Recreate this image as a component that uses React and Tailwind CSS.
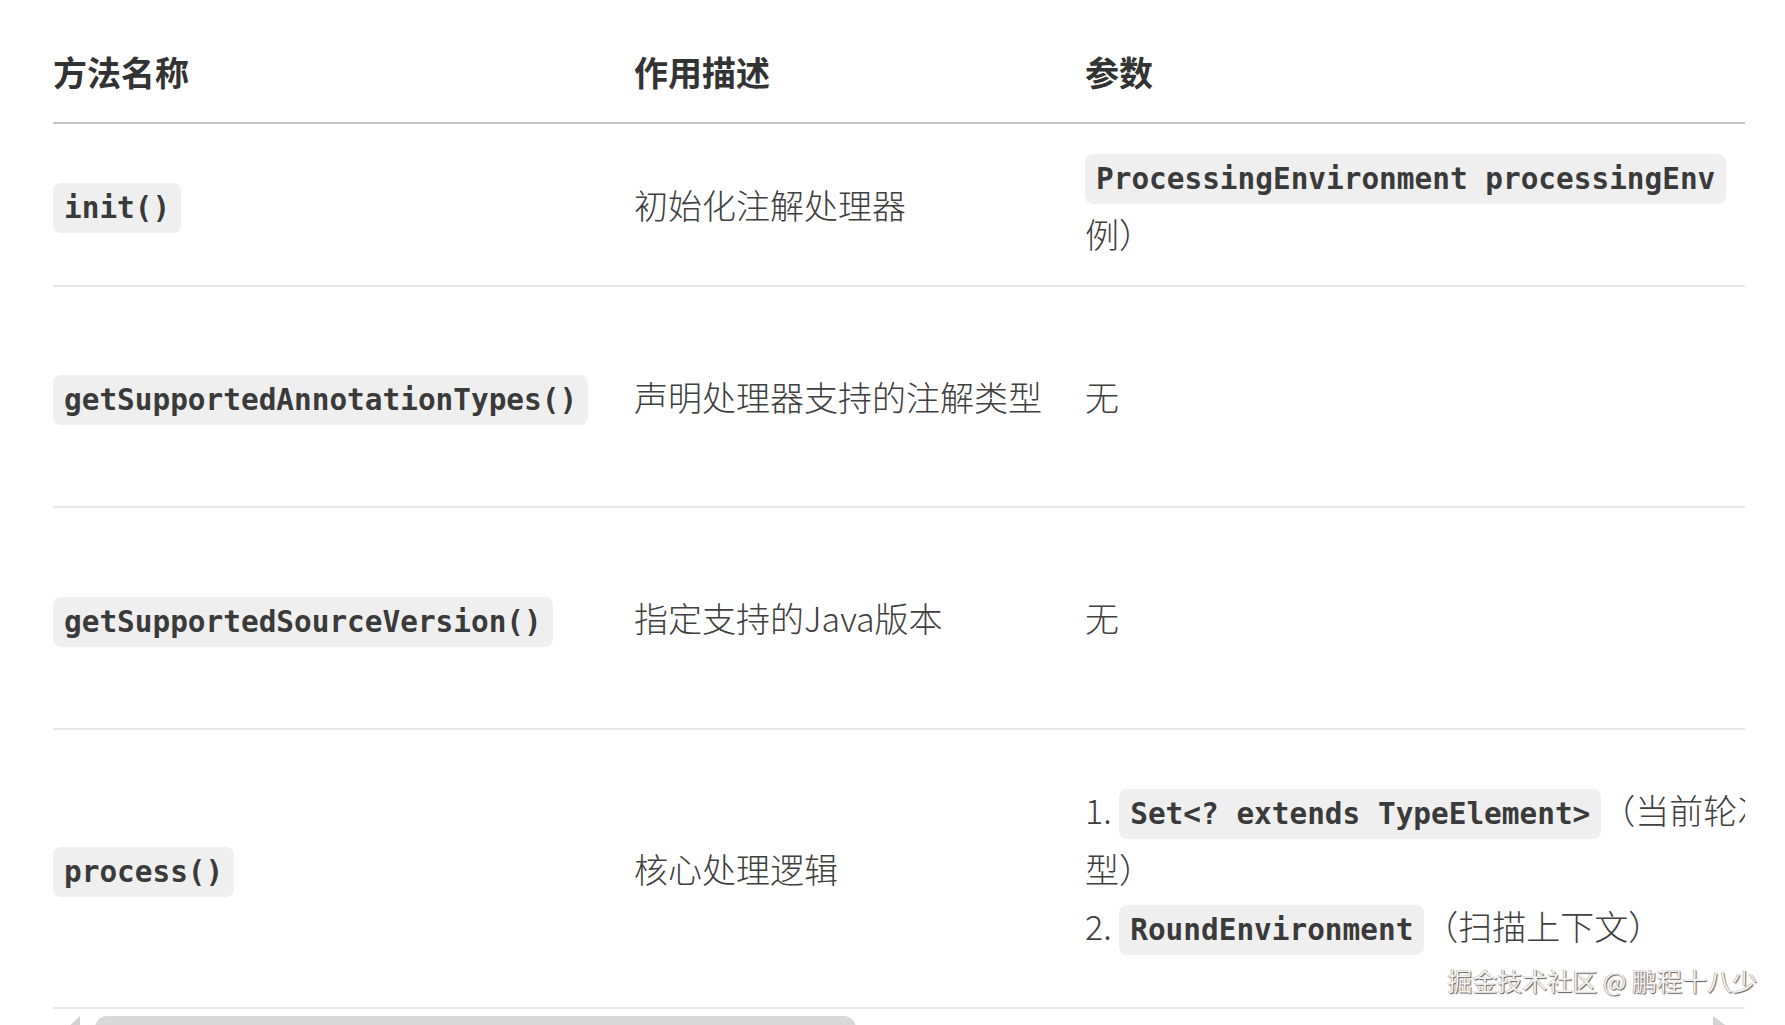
import React from 'react';

const Code = ({ children }) => (
  <code className="whitespace-nowrap rounded-[8px] bg-[#efefef] px-[11px] py-[8px] font-['DejaVu_Sans_Mono',monospace] text-[29.4px] font-bold text-[#3a3a3a]">
    {children}
  </code>
);

const rows = [
  {
    id: 'init',
    height: 'h-[163px]',
    name: 'init()',
    desc: '初始化注解处理器',
    params: (
      <div>
        <Code>ProcessingEnvironment processingEnv</Code>（处理环境实例）
      </div>
    ),
    ret: 'void',
  },
  {
    id: 'types',
    height: 'h-[221px]',
    name: 'getSupportedAnnotationTypes()',
    desc: '声明处理器支持的注解类型',
    params: '无',
    ret: 'Set<String>（注解全限定名集合）',
  },
  {
    id: 'version',
    height: 'h-[222px]',
    name: 'getSupportedSourceVersion()',
    desc: '指定支持的Java版本',
    params: '无',
    ret: 'SourceVersion（通常返回最新版本）',
  },
  {
    id: 'process',
    height: 'h-[279px]',
    name: 'process()',
    desc: '核心处理逻辑',
    params: (
      <div>
        <div>
          1. <Code>Set&lt;? extends TypeElement&gt;</Code>（当前轮次的注解类
          <br />
          型）
        </div>
        <div>
          2. <Code>RoundEnvironment</Code>（扫描上下文）
        </div>
      </div>
    ),
    ret: 'boolean（是否声明这些注解已被处理，后续处理器不再处理）',
  },
];

const cols = 'grid grid-cols-[581px_451px_900px_360px] items-center';

export default function App() {
  return (
    <div className="relative h-[1025px] w-[1785px] overflow-hidden bg-white pt-[21px] pl-[53px] font-['Noto_Sans_CJK_SC',sans-serif] text-[34px] leading-[1.7] text-[#404040]">
      <div className="w-[1692px] overflow-hidden">
        <div className="w-max">
          <div className={`${cols} h-[103px] border-b-2 border-[#c4c4c4] font-bold text-[#333]`}>
            <div>方法名称</div>
            <div>作用描述</div>
            <div>参数</div>
            <div>返回值</div>
          </div>

          {rows.map((row) => (
            <div key={row.id} className={`${cols} ${row.height} border-b-2 border-[#e7e7e7]`}>
              <div>
                <Code>{row.name}</Code>
              </div>
              <div className="font-light">{row.desc}</div>
              <div className="pr-[20px] font-light">{row.params}</div>
              <div className="pr-[20px] font-light">{row.ret}</div>
            </div>
          ))}
        </div>

        {/* fake horizontal scrollbar */}
        <div className="mt-[7px] flex h-[30px] items-start">
          <svg width="42" height="30" viewBox="0 0 42 30" className="shrink-0">
            <path d="M12 14 L27 0 L27 28 Z" fill="#d2d2d2" />
          </svg>
          <div className="h-[30px] w-[761px] rounded-[12px] bg-[#d9d9d9]" />
          <div className="flex-1" />
          <svg width="30" height="30" viewBox="0 0 30 30" className="mr-[5px] shrink-0">
            <path d="M3 0 L22 14 L3 28 Z" fill="#d2d2d2" />
          </svg>
        </div>
      </div>

      <div className="absolute right-[28px] top-[963px] text-[25px] leading-[1.4] text-[#f2f2f2] [text-shadow:1px_1px_1px_#5e5e5e,-0.5px_-0.5px_0_#a0a0a0]">
        掘金技术社区 @ 鹏程十八少
      </div>
    </div>
  );
}
